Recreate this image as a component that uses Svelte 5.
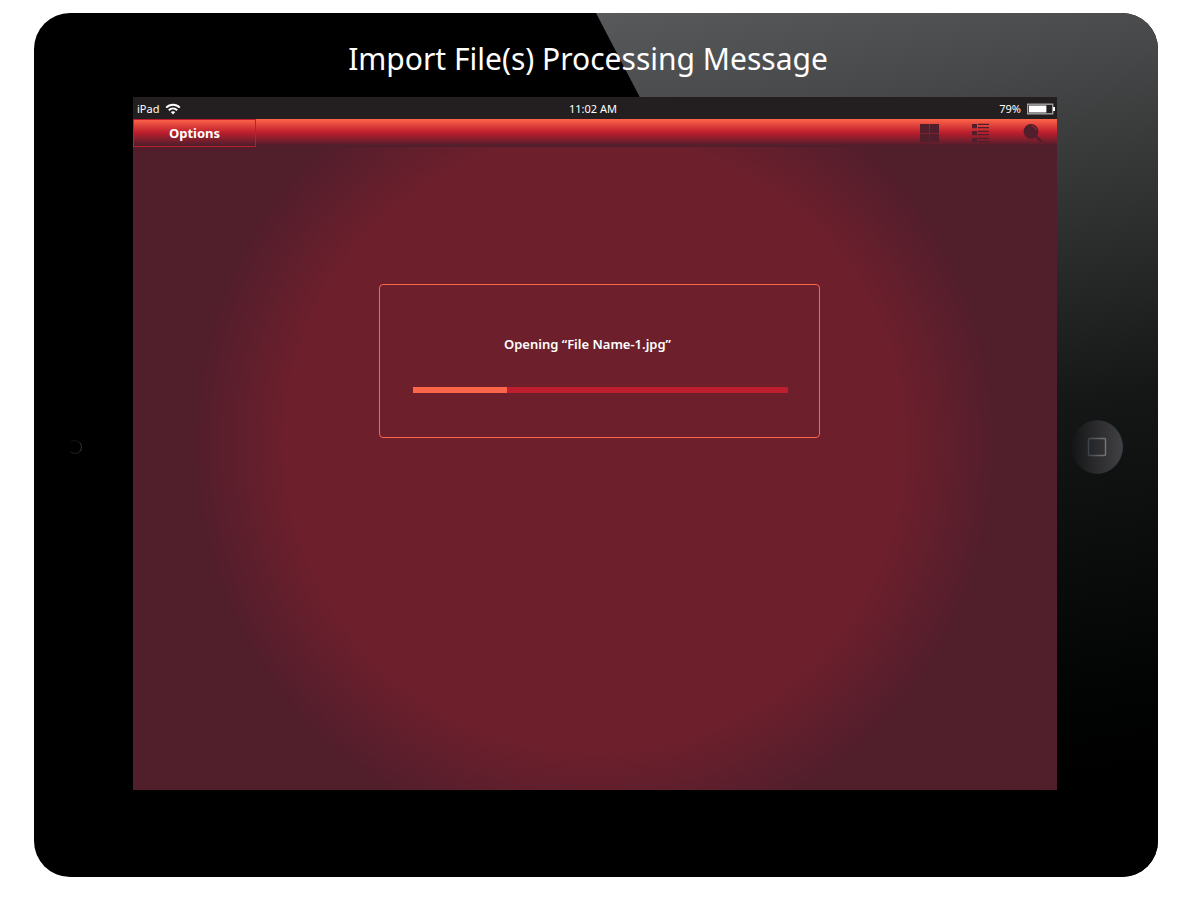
<script lang="ts">
	let fileName = $state('File Name-1.jpg');
	let progress = $state(25);
	let battery = $state(79);
	let time = $state('11:02 AM');
</script>

<main class="page">
	<div class="tablet">
		<div class="gloss"></div>
		<h1>Import File(s) Processing Message</h1>

		<div class="camera"></div>

		<section class="screen">
			<div class="status">
				<div class="carrier">
					<span>iPad</span>
					<svg width="16" height="12" viewBox="0 0 16 12" aria-hidden="true">
						<g fill="none" stroke="#fff" stroke-width="2">
							<path d="M1.2 4.6C5 .8 11 .8 14.8 4.6" />
							<path d="M3.8 7.2c2.4-2.3 6-2.3 8.4 0" />
						</g>
						<path d="M8 11.4 5.7 9.1c1.3-1.2 3.3-1.2 4.6 0z" fill="#fff" />
					</svg>
				</div>
				<time>{time}</time>
				<div class="power">
					<span>{battery}%</span>
					<svg width="28" height="12" viewBox="0 0 28 12" aria-hidden="true">
						<rect x="0.7" y="1.2" width="25" height="9.6" fill="#231f20" stroke="#a3a1a2" stroke-width="1.4" />
						<rect x="2" y="2.5" width={battery * 0.22} height="7" fill="#fff" />
						<rect x="26" y="4" width="2" height="4" fill="#fff" />
					</svg>
				</div>
			</div>

			<nav>
				<button class="options">Options</button>
				<div class="tools">
					<button class="tool" aria-label="Grid view">
						<svg width="20" height="20" viewBox="0 0 20 20">
							<path d="M1 1h9v9H1zM10.4 1H20v9h-9.6zM1 10.5h9V19H1zM10.4 10.5H20V19h-9.6z" />
						</svg>
					</button>
					<button class="tool" aria-label="List view">
						<svg width="20" height="20" viewBox="0 0 20 20">
							<path d="M1 1h5v4.300H1zM1 8h5v4.300H1zM1 15h5v4.300H1z" />
							<path d="M7 .8h11v1.300H7zM7 3.900h11v1.300H7zM7 7.800h11v1.300H7zM7 10.900h11v1.300H7zM7 14.800h11v1.300H7zM7 17.900h11v1.300H7z" />
						</svg>
					</button>
					<button class="tool" aria-label="Search">
						<svg width="20" height="20" viewBox="0 0 20 20">
							<circle cx="8" cy="8.400" r="7.400" />
							<path d="m11.500 13.500 2-1.800 5.700 6.200-1.700 1.500z" />
							<path d="M8.500 3c2.500.2 4 1.600 4.300 4" fill="none" stroke="#b32a31" stroke-width="1" />
						</svg>
					</button>
				</div>
			</nav>

			<div class="content">
				<div class="message" role="status">
					<label for="import-progress">Opening “{fileName}”</label>
					<progress id="import-progress" max="100" value={progress}></progress>
				</div>
			</div>
		</section>

		<button class="home" aria-label="Home">
			<svg width="52" height="54" viewBox="0 0 52 54">
				<defs>
					<linearGradient id="home-fill">
						<stop offset="0" stop-color="#141516" />
						<stop offset="0.5" stop-color="#2c2c2e" />
						<stop offset="1" stop-color="#414144" />
					</linearGradient>
					<linearGradient id="home-rim">
						<stop offset="0.2" stop-color="#27313a" stop-opacity="0" />
						<stop offset="1" stop-color="#33404c" />
					</linearGradient>
					<linearGradient id="home-square">
						<stop offset="0" stop-color="#3d444b" />
						<stop offset="1" stop-color="#77777a" />
					</linearGradient>
				</defs>
				<ellipse cx="26" cy="27" rx="25.500" ry="26.500" fill="url(#home-fill)" stroke="url(#home-rim)" />
				<rect x="17.500" y="18.500" width="17" height="17" rx="1" fill="none" stroke="url(#home-square)" stroke-width="1.400" />
			</svg>
		</button>
	</div>
</main>

<style>
	:global(body) {
		margin: 0;
		background: #fff;
	}

	.page {
		padding: 13px 42px 24px 34px;
		font-family: 'Noto Sans', 'Open Sans', sans-serif;
		color: #fff;
	}

	.tablet {
		position: relative;
		display: grid;
		grid-template-columns: 99px 1fr 101px;
		grid-template-rows: 84px auto 87px;
		background: #000;
		border-radius: 36px;
		overflow: hidden;
	}

	.gloss {
		position: absolute;
		inset: 0;
		background: linear-gradient(170deg, #5a5b5d 8%, #464748 22%, #393a3a 30%, #151716 54%, #020303 82%, #000 90%);
		clip-path: polygon(50% 0, 100% 0, 100% 100%, 90% 100%);
	}

	h1 {
		position: relative;
		grid-column: 1 / -1;
		align-self: center;
		margin: 0;
		padding: 8px 16px 0 0;
		font-size: 30px;
		line-height: 44px;
		font-weight: 400;
		text-align: center;
	}

	.camera {
		align-self: center;
		justify-self: center;
		width: 12px;
		height: 12px;
		margin: 6px 18px 0 0;
		border: 1px solid;
		border-color: #0d1319 #2b333c #1a222a #000;
		border-radius: 50%;
	}

	.screen {
		position: relative;
		display: flex;
		flex-direction: column;
		aspect-ratio: 4 / 3;
		background: radial-gradient(circle 405px at center, #6e1f2c 75%, #511e2c 100%);
	}

	.status {
		display: grid;
		grid-template-columns: 1fr auto 1fr;
		align-items: center;
		height: 22px;
		box-sizing: border-box;
		padding: 1px 2px 0 4px;
		background: #231f20;
		font-size: 11px;
		line-height: 16px;
	}

	time {
		padding-right: 6px;
	}

	.carrier,
	.power {
		display: flex;
		align-items: center;
		gap: 6px;
	}

	.power {
		justify-content: flex-end;
	}

	nav {
		display: flex;
		justify-content: space-between;
		height: 28px;
		background: linear-gradient(#ff6549 0, #be1e2d 48%, #511e2c 94%);
	}

	button {
		padding: 0;
		border: 0;
		background: none;
		color: inherit;
		font: inherit;
		cursor: pointer;
	}

	.options {
		width: 123px;
		border: 1px solid #be1e2d;
		font-size: 13px;
		line-height: 16px;
		font-weight: 700;
	}

	.tools {
		display: flex;
		align-items: center;
		gap: 32px;
		padding-right: 14px;
	}

	.tool {
		display: flex;
	}

	.tool svg {
		fill: #511e2c;
	}

	.content {
		flex: 1;
		display: flex;
		justify-content: center;
		align-items: flex-start;
		padding: 137px 0 0 9px;
	}

	.message {
		box-sizing: border-box;
		display: flex;
		flex-direction: column;
		gap: 33px;
		width: 100%;
		max-width: 441px;
		padding: 49px 31px 44px 33px;
		border: 1px solid #ff6549;
		border-radius: 4px;
		background: #6e1f2c;
	}

	label {
		padding-right: 26px;
		font-size: 13px;
		line-height: 20px;
		font-weight: 600;
		text-align: center;
	}

	progress {
		appearance: none;
		display: block;
		width: 100%;
		height: 6px;
		border: 0;
		background: #be1e2d;
	}

	progress::-webkit-progress-bar {
		background: #be1e2d;
	}

	progress::-webkit-progress-value {
		background: #ff6549;
	}

	.home {
		position: relative;
		display: flex;
		align-self: center;
		justify-self: center;
		margin: 6px 22px 0 0;
	}
</style>
